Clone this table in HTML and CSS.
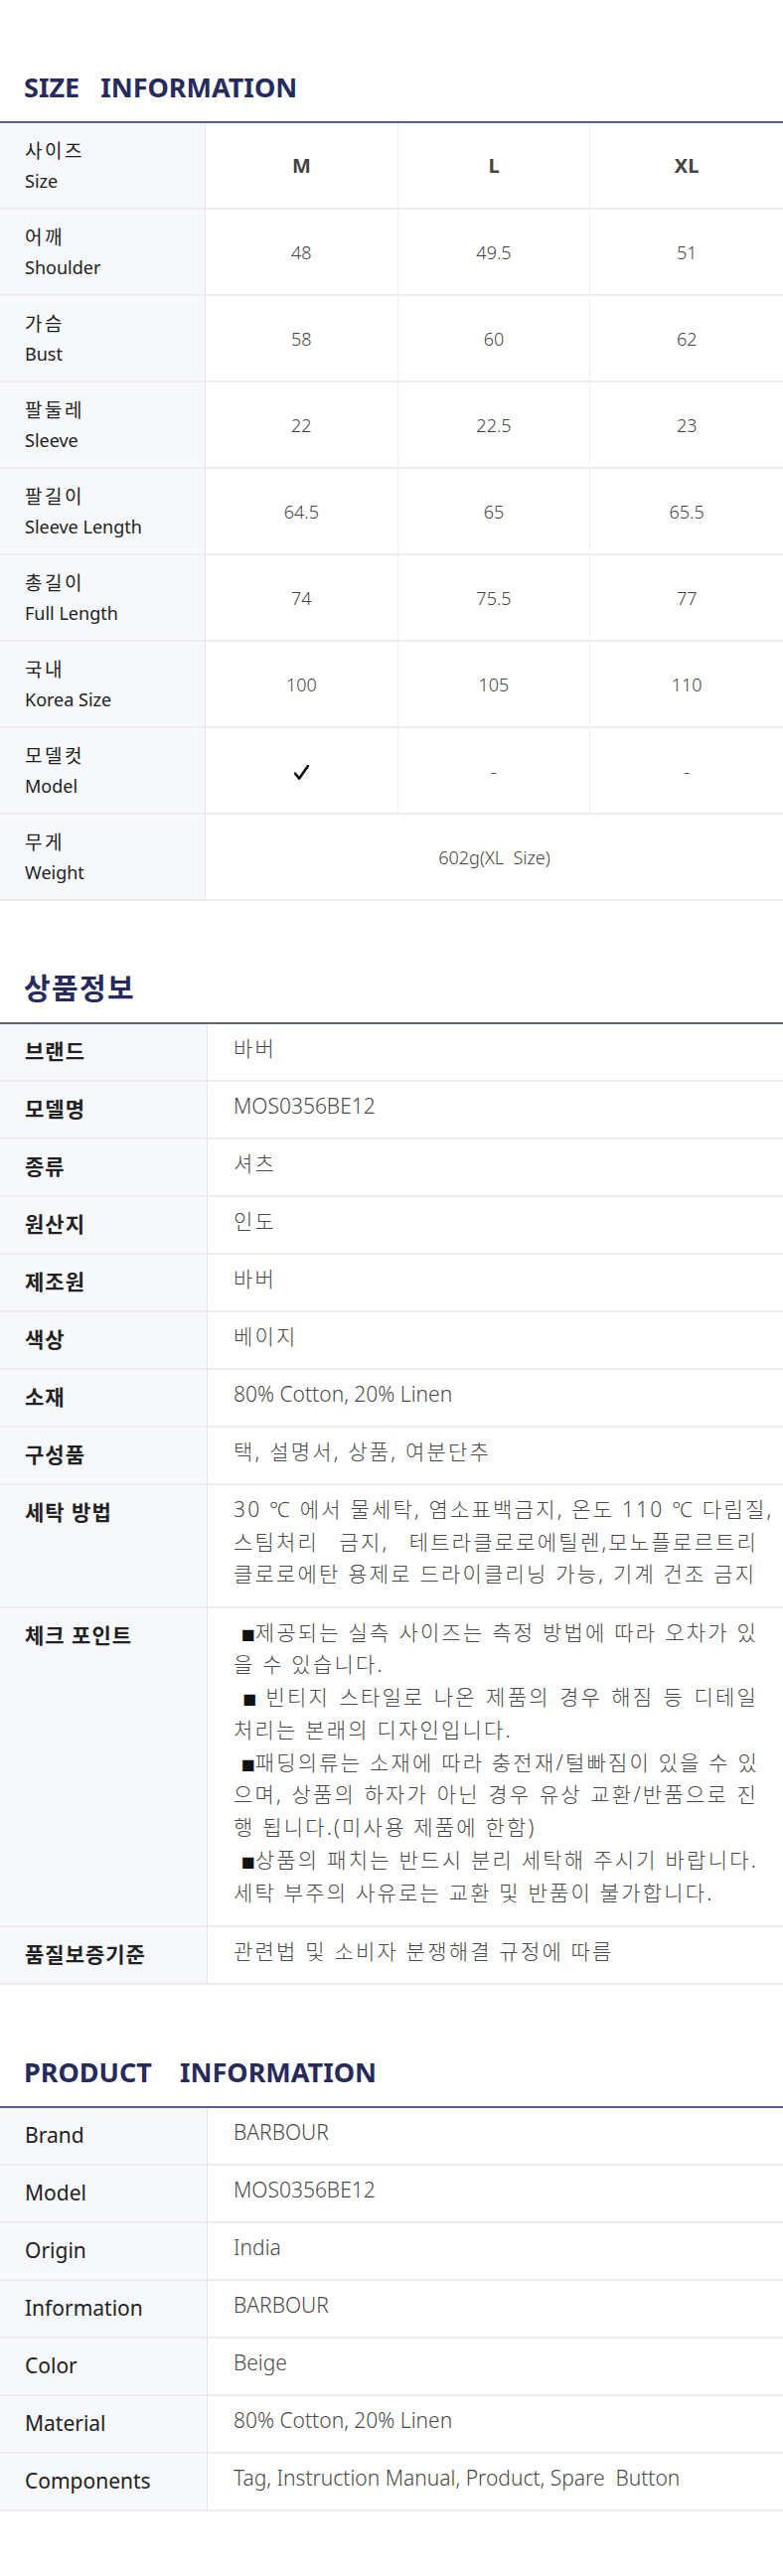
FILE: index.html
```html
<!DOCTYPE html>
<html lang="ko">

<head>
    <meta charset="UTF-8">
    <meta name="viewport" content="width=device-width, initial-scale=1.0">
    <title>상품 상세 정보</title>
    <link rel="stylesheet" href="styles.css">
</head>

<body>
    <!-- 사이즈 정보 -->
    <div class="section">
        <h2 class="section-title">SIZE&nbsp;&nbsp;&nbsp;INFORMATION</h2>
        <table class="size-table">
            <colgroup>
                <col class="col-label">
                <col>
                <col>
                <col>
            </colgroup>
            <tr class="head">
                <th class="label"><span class="ko">사이즈</span><span class="en">Size</span></th>
                <th>M</th>
                <th>L</th>
                <th>XL</th>
            </tr>
            <tr>
                <th class="label"><span class="ko">어깨</span><span class="en">Shoulder</span></th>
                <td>48</td>
                <td>49.5</td>
                <td>51</td>
            </tr>
            <tr>
                <th class="label"><span class="ko">가슴</span><span class="en">Bust</span></th>
                <td>58</td>
                <td>60</td>
                <td>62</td>
            </tr>
            <tr>
                <th class="label"><span class="ko">팔둘레</span><span class="en">Sleeve</span></th>
                <td>22</td>
                <td>22.5</td>
                <td>23</td>
            </tr>
            <tr>
                <th class="label"><span class="ko">팔길이</span><span class="en">Sleeve Length</span></th>
                <td>64.5</td>
                <td>65</td>
                <td>65.5</td>
            </tr>
            <tr>
                <th class="label"><span class="ko">총길이</span><span class="en">Full Length</span></th>
                <td>74</td>
                <td>75.5</td>
                <td>77</td>
            </tr>
            <tr>
                <th class="label"><span class="ko">국내</span><span class="en">Korea Size</span></th>
                <td>100</td>
                <td>105</td>
                <td>110</td>
            </tr>
            <tr>
                <th class="label"><span class="ko">모델컷</span><span class="en">Model</span></th>
                <td class="check">
                    <svg class="check-icon" width="15" height="15" viewBox="0 0 15 15">
                        <path d="M1 8.6 L5.2 13.6 L14 1" fill="none" stroke="#111" stroke-width="2.6" stroke-linejoin="round" stroke-linecap="round"/>
                    </svg>
                </td>
                <td>-</td>
                <td>-</td>
            </tr>
            <tr>
                <th class="label"><span class="ko">무게</span><span class="en">Weight</span></th>
                <td colspan="3">602g(XL&nbsp; Size)</td>
            </tr>
        </table>
    </div>

    <!-- 상품정보 -->
    <div class="section">
        <h2 class="section-title ko">상품정보</h2>
        <table class="info-table ko">
            <colgroup>
                <col class="col-label">
                <col>
            </colgroup>
            <tr>
                <th>브랜드</th>
                <td>바버</td>
            </tr>
            <tr>
                <th>모델명</th>
                <td class="latin">MOS0356BE12</td>
            </tr>
            <tr>
                <th>종류</th>
                <td>셔츠</td>
            </tr>
            <tr>
                <th>원산지</th>
                <td>인도</td>
            </tr>
            <tr>
                <th>제조원</th>
                <td>바버</td>
            </tr>
            <tr>
                <th>색상</th>
                <td>베이지</td>
            </tr>
            <tr>
                <th>소재</th>
                <td class="latin">80% Cotton, 20% Linen</td>
            </tr>
            <tr>
                <th>구성품</th>
                <td>택, 설명서, 상품, 여분단추</td>
            </tr>
            <tr>
                <th>세탁 방법</th>
                <td class="multi wash">
                    <span class="ln">30 ℃ 에서 물세탁, 염소표백금지, 온도 110 ℃ 다림질,</span>
                    <span class="ln">스팀처리 금지, 테트라클로로에틸렌,모노플로르트리</span>
                    <span class="ln end">클로로에탄 용제로 드라이클리닝 가능, 기계 건조 금지</span>
                </td>
            </tr>
            <tr>
                <th>체크 포인트</th>
                <td class="multi notice">
                    <span class="ln">&nbsp;<span class="sq">■</span>제공되는 실측 사이즈는 측정 방법에 따라 오차가 있</span>
                    <span class="ln end">을 수 있습니다.</span>
                    <span class="ln">&nbsp;<span class="sq">■</span> 빈티지 스타일로 나온 제품의 경우 해짐 등 디테일</span>
                    <span class="ln end">처리는 본래의 디자인입니다.</span>
                    <span class="ln">&nbsp;<span class="sq">■</span>패딩의류는 소재에 따라 충전재/털빠짐이 있을 수 있</span>
                    <span class="ln">으며, 상품의 하자가 아닌 경우 유상 교환/반품으로 진</span>
                    <span class="ln end">행 됩니다.(미사용 제품에 한함)</span>
                    <span class="ln">&nbsp;<span class="sq">■</span>상품의 패치는 반드시 분리 세탁해 주시기 바랍니다.</span>
                    <span class="ln end">세탁 부주의 사유로는 교환 및 반품이 불가합니다.</span>
                </td>
            </tr>
            <tr>
                <th>품질보증기준</th>
                <td>관련법 및 소비자 분쟁해결 규정에 따름</td>
            </tr>
        </table>
    </div>

    <!-- PRODUCT INFORMATION -->
    <div class="section">
        <h2 class="section-title">PRODUCT&nbsp;&nbsp;&nbsp;&nbsp;INFORMATION</h2>
        <table class="info-table en">
            <colgroup>
                <col class="col-label">
                <col>
            </colgroup>
            <tr>
                <th>Brand</th>
                <td>BARBOUR</td>
            </tr>
            <tr>
                <th>Model</th>
                <td>MOS0356BE12</td>
            </tr>
            <tr>
                <th>Origin</th>
                <td>India</td>
            </tr>
            <tr>
                <th>Information</th>
                <td>BARBOUR</td>
            </tr>
            <tr>
                <th>Color</th>
                <td>Beige</td>
            </tr>
            <tr>
                <th>Material</th>
                <td>80% Cotton, 20% Linen</td>
            </tr>
            <tr>
                <th>Components</th>
                <td>Tag, Instruction Manual, Product, Spare&nbsp; Button</td>
            </tr>
        </table>
    </div>
</body>

</html>
```

FILE: styles.css
```css
* {
    margin: 0;
    padding: 0;
    box-sizing: border-box;
}

body {
    font-family: "Noto Sans", "Noto Sans CJK KR", sans-serif;
    color: #222;
    background-color: #fff;
}

/* 각 섹션 */
.section {
    padding-top: 70px;
}

.section-title {
    font-size: 27px;
    line-height: 36px;
    font-weight: 700;
    color: #262a5c;
    padding-left: 24px;
    margin-bottom: 16px;
}

/* 한글 제목은 조금 크게 */
.section-title.ko {
    font-size: 29px;
    letter-spacing: 1.3px;
}

/* 공통 테이블 */
table {
    width: 100%;
    border-collapse: separate;
    border-spacing: 0;
    table-layout: fixed;
    border-top: 2px solid #5c5f88;
}

th,
td {
    border-bottom: 2px solid #ededed;
}

/* 사이즈 테이블 */
.size-table .col-label {
    width: 207px;
}

.size-table tr {
    height: 87px;
}

.size-table th,
.size-table td {
    text-align: center;
    vertical-align: middle;
    font-size: 18px;
    font-weight: 300;
    color: #444;
    border-right: 1px solid #f0f0f0;
}

.size-table th:last-child,
.size-table td:last-child {
    border-right: none;
}

.size-table .label {
    text-align: left;
    padding-left: 25px;
    line-height: 30px;
    font-weight: 400;
    color: #222;
    background-color: #f7f8fc;
    border-right: 1px solid #e4e5ee;
}

.size-table .label span {
    display: block;
}

.size-table .label .ko {
    font-size: 19px;
    letter-spacing: 2.5px;
}

.size-table .head th {
    font-size: 20px;
    font-weight: 700;
}

.size-table .head th.label {
    font-size: 18px;
    font-weight: 400;
}

/* 체크 표시 */
.check-icon {
    display: inline-block;
    vertical-align: middle;
}

/* 상품정보 테이블 */
.info-table .col-label {
    width: 209px;
}

.info-table th,
.info-table td {
    text-align: left;
    vertical-align: top;
    font-size: 21px;
    line-height: 32px;
}

.info-table th {
    padding: 11px 0 0 25px;
    font-weight: 700;
    color: #222;
    background-color: #f7f8fc;
    border-right: 1px solid #e4e5ee;
}

.info-table.ko th {
    letter-spacing: 1px;
}

.info-table td {
    padding: 8px 25px 16px 26px;
    font-weight: 300;
    color: #4a4a4a;
}

/* 한글 값은 자간을 넓게 */
.info-table.ko td {
    letter-spacing: 2.2px;
}

.info-table.ko td.latin {
    letter-spacing: 0;
}

.info-table.en th {
    font-weight: 400;
}

/* 여러 줄 내용 - 줄마다 양쪽 정렬 */
.info-table .ln {
    display: block;
    white-space: nowrap;
    text-align: justify;
    text-align-last: justify;
}

.info-table .ln.end {
    text-align-last: left;
}

.info-table .wash {
    line-height: 32.5px;
}

.info-table .notice {
    line-height: 32.8px;
}

.sq {
    display: inline-block;
    font-size: 14px;
    line-height: 1;
    letter-spacing: 0;
    color: #111;
}
```
